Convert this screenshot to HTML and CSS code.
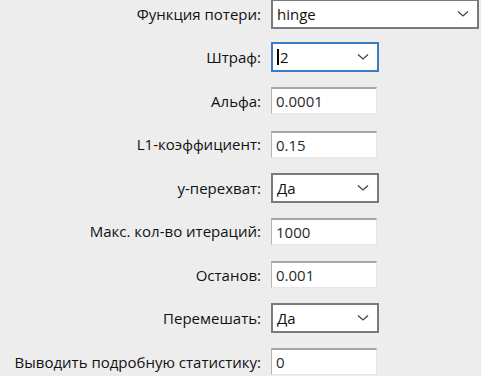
FILE: index.html
```html
<!DOCTYPE html>
<html lang="ru">
<head>
	<meta charset="UTF-8">
	<title>Параметры</title>
	<link rel="stylesheet" href="styles.css">
</head>
<body>
	<div class="form">
		<label class="lbl">Функция потери:</label>
		<div class="combo wide"><span class="val">hinge</span><svg class="arrow" width="12" height="8" viewBox="0 0 12 8"><path d="M1 1.5 L6 6 L11 1.5" fill="none" stroke="#444" stroke-width="1.3"/></svg></div>

		<label class="lbl">Штраф:</label>
		<div class="combo focus"><span class="val"><span class="caret"></span>2</span><svg class="arrow" width="12" height="8" viewBox="0 0 12 8"><path d="M1 1.5 L6 6 L11 1.5" fill="none" stroke="#444" stroke-width="1.3"/></svg></div>

		<label class="lbl">Альфа:</label>
		<div class="edit">0.0001</div>

		<label class="lbl">L1-коэффициент:</label>
		<div class="edit">0.15</div>

		<label class="lbl">y-перехват:</label>
		<div class="combo"><span class="val">Да</span><svg class="arrow" width="12" height="8" viewBox="0 0 12 8"><path d="M1 1.5 L6 6 L11 1.5" fill="none" stroke="#444" stroke-width="1.3"/></svg></div>

		<label class="lbl">Макс. кол-во итераций:</label>
		<div class="edit">1000</div>

		<label class="lbl">Останов:</label>
		<div class="edit">0.001</div>

		<label class="lbl">Перемешать:</label>
		<div class="combo"><span class="val">Да</span><svg class="arrow" width="12" height="8" viewBox="0 0 12 8"><path d="M1 1.5 L6 6 L11 1.5" fill="none" stroke="#444" stroke-width="1.3"/></svg></div>

		<label class="lbl">Выводить подробную статистику:</label>
		<div class="edit">0</div>
	</div>
</body>
</html>
```
FILE: styles.css
```css
body{
	margin:0;
	background-color:#ededed;
	font-family:"Open Sans","Noto Sans",sans-serif;
	font-size:15px;
	color:#111;
	overflow:hidden;
}
.form{
	display:grid;
	grid-template-columns:261px 1fr;
	grid-auto-rows:43.44px;
	column-gap:10px;
	align-items:center;
	margin-top:-7.7px;
	padding-right:2px;
}
.lbl{
	justify-self:end;
	white-space:nowrap;
}
.combo{
	box-sizing:border-box;
	height:30px;
	width:108px;
	background-color:#fff;
	border:2px solid #7a7a7a;
	display:flex;
	align-items:center;
	justify-content:space-between;
	padding:0 8px 0 4px;
}
.combo.wide{
	width:208px;
}
.combo.focus{
	border-color:#3a7cc0;
}
.val{
	display:flex;
	align-items:center;
}
.caret{
	width:2px;
	height:16px;
	background-color:#000;
	margin-right:1px;
}
.edit{
	box-sizing:border-box;
	height:27px;
	width:106px;
	background-color:#fff;
	border-top:2px solid #a6a6a6;
	border-left:1px solid #b4b4b4;
	border-right:1px solid #e6e6e6;
	border-bottom:1px solid #e6e6e6;
	padding:0 0 0 4px;
	display:flex;
	align-items:center;
	color:#2a2a2a;
}
```
